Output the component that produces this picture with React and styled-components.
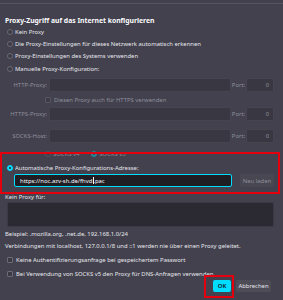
import React from 'react';
import styled, { createGlobalStyle } from 'styled-components';

const Global = createGlobalStyle`
  html, body { margin: 0; padding: 0; background: #42414d; }
  body {
    width: 283px; height: 300px; overflow: hidden;
    font-family: "Noto Sans", "Open Sans", sans-serif;
    color: #e8e8ee;
  }
  * { box-sizing: border-box; }
`;

const Dialog = styled.div`
  position: relative;
  width: 283px;
  height: 300px;
  padding-top: 3px;
`;

const Content = styled.div`
  border-top: 1px solid #55545f;
  padding: 0 9px 0 5px;
  display: flex;
  flex-direction: column;
  font-size: 5.9px;
`;

const Title = styled.div`
  margin-top: 12px;
  height: 10px;
  line-height: 10px;
  font-weight: 700;
  font-size: 6.8px;
  color: #fbfbfe;
`;

const Row = styled.div`
  display: flex;
  align-items: center;
  height: ${p => p.$h || 12}px;
  margin-top: ${p => p.$mt || 0}px;
  padding-left: ${p => p.$pl || 0}px;
  color: ${p => (p.$dim ? '#8f8f9d' : '#e8e8ee')};
  white-space: nowrap;
`;

const Radio = styled.span`
  flex: none;
  width: 6px;
  height: 6px;
  border-radius: 50%;
  margin: 0 2px 0 0;
  border: 1px solid ${p => (p.$checked ? '#00ddff' : '#6b6a75')};
  background: ${p => (p.$checked ? '#00ddff' : '#3a3944')};
  opacity: ${p => (p.$dim ? 0.45 : 1)};
  display: flex;
  align-items: center;
  justify-content: center;
  &::after {
    content: '';
    display: ${p => (p.$checked ? 'block' : 'none')};
    width: 2px;
    height: 2px;
    border-radius: 50%;
    background: #2b2a33;
  }
`;

const Spacer = styled.span`
  flex: none;
  width: ${p => p.$w}px;
`;

const Check = styled.span`
  flex: none;
  width: 6px;
  height: 6px;
  border-radius: 1px;
  margin-right: 3px;
  border: 1px solid #6b6a75;
  background: #3a3944;
  opacity: ${p => (p.$dim ? 0.5 : 1)};
`;

const FieldLabel = styled.span`
  width: 43px;
  flex: none;
  text-align: right;
  padding-right: 1px;
  color: #8f8f9d;
`;

const Field = styled.div`
  flex: 1;
  height: 14px;
  border-radius: 2px;
  background: #393842;
  border: 1px solid #45444f;
  margin-left: 1px;
`;

const PortLabel = styled.span`
  flex: none;
  width: 15px;
  text-align: center;
  color: #8f8f9d;
`;

const PortField = styled.div`
  flex: none;
  width: 28px;
  height: 14px;
  border-radius: 2px;
  background: #393842;
  border: 1px solid #45444f;
  color: #8f8f9d;
  text-align: right;
  padding-right: 4px;
  line-height: 12px;
`;

const UrlInput = styled.div`
  flex: none;
  width: 218px;
  height: 13px;
  margin-left: 9px;
  border: 1px solid #00ddff;
  border-radius: 2px;
  background: #1f1e25;
  color: #fbfbfe;
  padding-left: 5px;
  display: flex;
  align-items: center;
`;

const Caret = styled.span`
  display: inline-block;
  width: 0.6px;
  height: 7px;
  background: #fbfbfe;
  margin: 0 0.2px;
`;

const GhostButton = styled.div`
  flex: none;
  width: 34px;
  height: 13px;
  margin-left: 8px;
  border-radius: 2px;
  background: #484752;
  color: #8f8f9d;
  display: flex;
  align-items: center;
  justify-content: center;
`;

const TextArea = styled.div`
  height: 25px;
  margin: 0 0 0 2px;
  border-radius: 2px;
  background: #2b2a33;
  border: 1px solid #3a3944;
`;

const Footer = styled.div`
  display: flex;
  justify-content: flex-end;
  gap: 5px;
  margin-top: 0;
  padding-right: 3px;
`;

const Button = styled.div`
  width: ${p => p.$w}px;
  height: 12px;
  border-radius: 2px;
  display: flex;
  align-items: center;
  justify-content: center;
  background: ${p => (p.$primary ? '#00ddff' : '#4d4c57')};
  color: ${p => (p.$primary ? '#15141a' : '#e8e8ee')};
  font-weight: ${p => (p.$primary ? 600 : 400)};
`;

const Highlight = styled.div`
  position: absolute;
  border: 2px solid #e3000f;
  left: ${p => p.$x}px;
  top: ${p => p.$y}px;
  width: ${p => p.$w}px;
  height: ${p => p.$h}px;
  pointer-events: none;
`;

export default function App() {
  return (
    <>
      <Global />
      <Dialog>
        <Content>
          <Title>Proxy-Zugriff auf das Internet konfigurieren</Title>
          <Row $pl={2}><Radio />Kein Proxy</Row>
          <Row $pl={2}><Radio />Die Proxy-Einstellungen für dieses Netzwerk automatisch erkennen</Row>
          <Row $pl={2}><Radio />Proxy-Einstellungen des Systems verwenden</Row>
          <Row $pl={2} $h={13}><Radio />Manuelle Proxy-Konfiguration:</Row>

          <Row $h={14} $mt={3}>
            <FieldLabel>HTTP-Proxy:</FieldLabel>
            <Field />
            <PortLabel>Port:</PortLabel>
            <PortField>0</PortField>
          </Row>
          <Row $h={15} $pl={40} $dim><Check $dim />Diesen Proxy auch für HTTPS verwenden</Row>
          <Row $h={14}>
            <FieldLabel>HTTPS-Proxy:</FieldLabel>
            <Field />
            <PortLabel>Port:</PortLabel>
            <PortField>0</PortField>
          </Row>
          <Row $h={14} $mt={8}>
            <FieldLabel>SOCKS-Host:</FieldLabel>
            <Field />
            <PortLabel>Port:</PortLabel>
            <PortField>0</PortField>
          </Row>
          <Row $h={12} $pl={40} $dim $mt={5}>
            <Radio $dim />SOCKS v4
            <Spacer $w={12} />
            <Radio $checked $dim />SOCKS v5
          </Row>
          <Row $h={10} $mt={3} $pl={2}><Radio $checked />Automatische Proxy-Konfigurations-Adresse:</Row>
          <Row $h={13} $mt={1}>
            <UrlInput>https://noc.azv-sh.de/fhvd<Caret />.pac</UrlInput>
            <GhostButton>Neu laden</GhostButton>
          </Row>
          <Row $h={10} $mt={5}>Kein Proxy für:</Row>
          <TextArea />
          <Row $h={12} $mt={1}>Beispiel: .mozilla.org, .net.de, 192.168.1.0/24</Row>
          <Row $h={12}>Verbindungen mit localhost, 127.0.0.1/8 und ::1 werden nie über einen Proxy geleitet.</Row>
          <Row $h={14} $mt={1} $pl={2}><Check />Keine Authentifizierungsanfrage bei gespeichertem Passwort</Row>
          <Row $h={13} $pl={2}><Check />Bei Verwendung von SOCKS v5 den Proxy für DNS-Anfragen verwenden</Row>
          <Footer>
            <Button $primary $w={18}>OK</Button>
            <Button $w={35}>Abbrechen</Button>
          </Footer>
        </Content>
        <Highlight $x={0} $y={152} $w={280} $h={42} />
        <Highlight $x={204} $y={275} $w={30} $h={23} />
      </Dialog>
    </>
  );
}
